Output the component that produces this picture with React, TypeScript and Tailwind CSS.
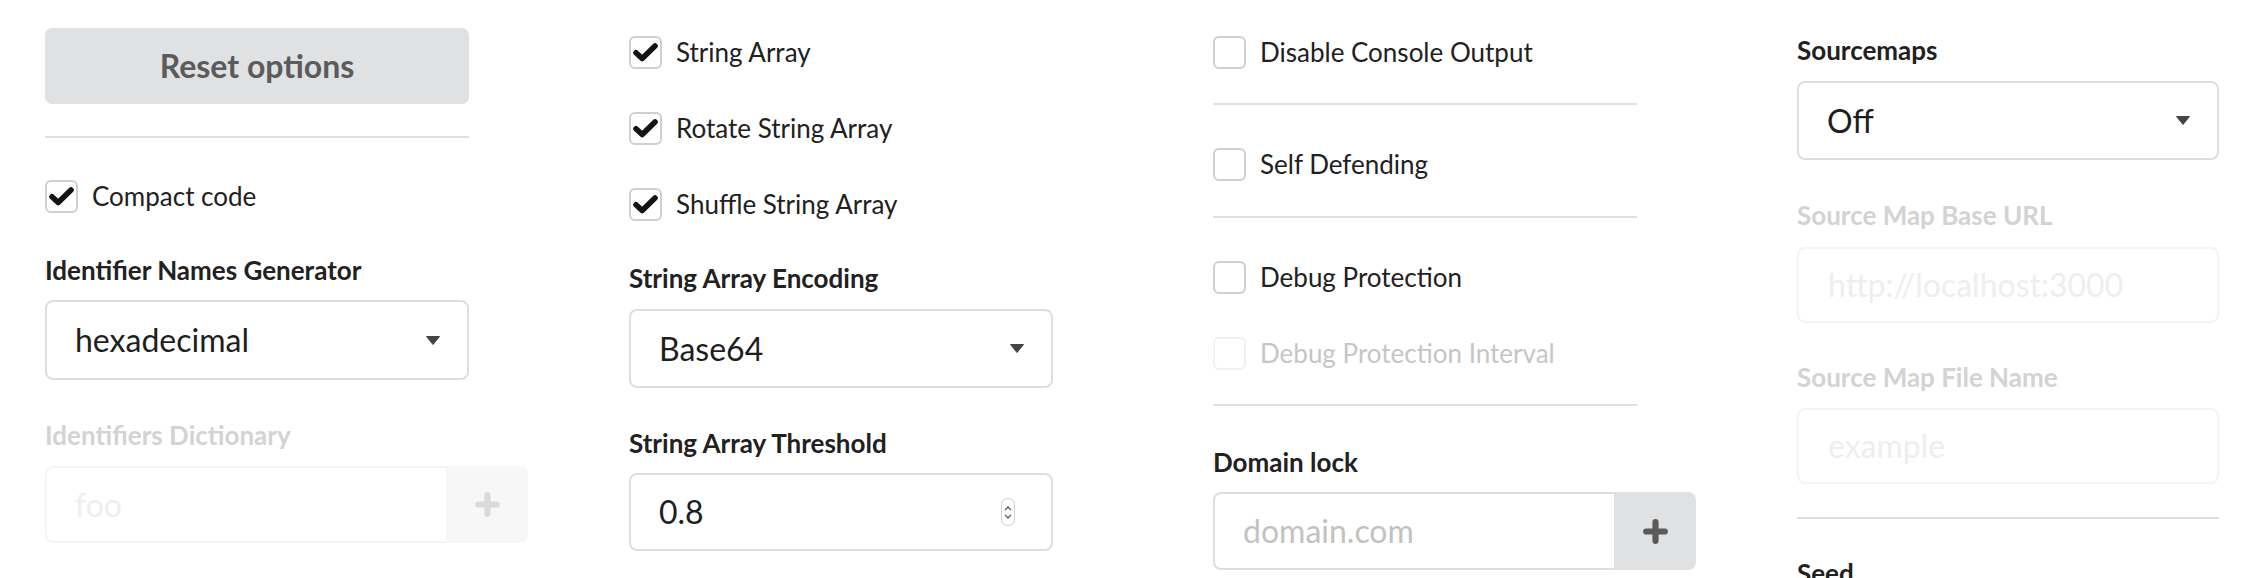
import React from "react";

const FONT = "font-['Lato',sans-serif]";

function CheckIcon() {
  return (
    <svg width="25" height="19" viewBox="0 0 25 19">
      <path d="M3 9.8 L9.2 15.5 L22 3" fill="none" stroke="#141414" strokeWidth="5.6" strokeLinecap="round" strokeLinejoin="round" />
    </svg>
  );
}

function Checkbox({ label, checked = false, disabled = false, className = "" }: { label: string; checked?: boolean; disabled?: boolean; className?: string }) {
  return (
    <div className={`flex items-center h-[33px] ${className}`}>
      <div
        className={
          disabled
            ? "w-[33px] h-[33px] rounded-[6px] border-2 border-[#f1f1f1] bg-white flex items-center justify-center"
            : "w-[33px] h-[33px] rounded-[6px] border-2 border-[#cfcfd0] bg-white flex items-center justify-center"
        }
      >
        {checked && <CheckIcon />}
      </div>
      <span className={disabled ? "ml-[14px] text-[26px] leading-[33px] text-[#c6c6c6]" : "ml-[14px] text-[26px] leading-[33px] text-[#212121]"}>
        {label}
      </span>
    </div>
  );
}

function Label({ children, disabled = false, className = "" }: { children: React.ReactNode; disabled?: boolean; className?: string }) {
  return (
    <div className={`text-[26px] leading-[25px] font-bold whitespace-nowrap ${disabled ? "text-[#d3d3d3]" : "text-[#212121]"} ${className}`}>
      {children}
    </div>
  );
}

function Divider({ className = "" }: { className?: string }) {
  return <div className={`w-full h-[2px] bg-[#dfdfe0] ${className}`} />;
}

function Caret() {
  return (
    <svg width="14" height="9" viewBox="0 0 14 9">
      <path d="M0.5 0.5 H13.5 L7 8.5 Z" fill="#454545" strokeLinejoin="round" stroke="#454545" strokeWidth="1" />
    </svg>
  );
}

function Select({ value, className = "" }: { value: string; className?: string }) {
  return (
    <div className={`w-full rounded-[8px] border-2 border-[#dedede] bg-white flex items-center pl-[28px] pr-[27px] ${className}`}>
      <span className="flex-1 text-[32px] text-[#1e1e1e]">{value}</span>
      <Caret />
    </div>
  );
}

function Plus({ color }: { color: string }) {
  return (
    <svg width="25" height="25" viewBox="0 0 25 25">
      <path d="M12.5 3.2 V21.8 M3.2 12.5 H21.8" stroke={color} strokeWidth="6.2" strokeLinecap="round" />
    </svg>
  );
}

function ActionInput({ placeholder, disabled = false, className = "" }: { placeholder: string; disabled?: boolean; className?: string }) {
  return (
    <div className={`flex w-[483px] ${className}`}>
      <div
        className={
          disabled
            ? "flex-1 rounded-l-[8px] border-2 border-r-0 border-[#f4f4f4] bg-white flex items-center pl-[28px]"
            : "flex-1 rounded-l-[8px] border-2 border-r-0 border-[#dedede] bg-white flex items-center pl-[28px]"
        }
      >
        <span className={disabled ? "text-[32px] text-[#eeeeee]" : "text-[32px] text-[#c2c2c2]"}>{placeholder}</span>
      </div>
      <div
        className={
          disabled
            ? "w-[82px] rounded-r-[8px] bg-[#f7f7f7] flex items-center justify-center"
            : "w-[82px] rounded-r-[8px] bg-[#e0e1e2] flex items-center justify-center"
        }
      >
        <Plus color={disabled ? "#dadada" : "#5a5a5a"} />
      </div>
    </div>
  );
}

function TextInput({ placeholder, className = "" }: { placeholder: string; className?: string }) {
  return (
    <div className={`w-full rounded-[8px] border-2 border-[#f4f4f4] bg-white flex items-center pl-[29px] ${className}`}>
      <span className="text-[32px] text-[#eeeeee]">{placeholder}</span>
    </div>
  );
}

function Spinner() {
  return (
    <div className="w-[14px] h-[28px] rounded-[7px] border border-[#cfcfcf] flex flex-col items-center justify-center gap-[3px]">
      <svg width="8" height="5" viewBox="0 0 8 5">
        <path d="M1 4.2 L4 1 L7 4.2" fill="none" stroke="#555" strokeWidth="1.2" />
      </svg>
      <svg width="8" height="5" viewBox="0 0 8 5">
        <path d="M1 0.8 L4 4 L7 0.8" fill="none" stroke="#555" strokeWidth="1.2" />
      </svg>
    </div>
  );
}

function NumberInput({ value, className = "" }: { value: string; className?: string }) {
  return (
    <div className={`w-full rounded-[8px] border-2 border-[#dedede] bg-white flex items-center pl-[28px] pr-[36px] ${className}`}>
      <span className="flex-1 text-[32px] text-[#1e1e1e]">{value}</span>
      <Spinner />
    </div>
  );
}

export default function App() {
  return (
    <div className={`w-[2242px] h-[578px] overflow-hidden bg-white ${FONT} text-[#212121]`}>
      <div className="grid grid-cols-[repeat(4,424px)] gap-x-[160px] pl-[45px]">
        {/* Column 1 */}
        <div className="flex flex-col items-start">
          <button className="mt-[28px] h-[76px] w-full rounded-[7px] bg-[#e0e1e2] text-[#5b5b5b] font-bold text-[32px] flex items-center justify-center">
            Reset options
          </button>
          <Divider className="mt-[32px]" />
          <Checkbox className="mt-[42px]" label="Compact code" checked />
          <Label className="mt-[45px]">Identifier Names Generator</Label>
          <Select className="mt-[17px] h-[80px]" value="hexadecimal" />
          <Label className="mt-[43px]" disabled>
            Identifiers Dictionary
          </Label>
          <ActionInput className="mt-[18px] h-[77px]" placeholder="foo" disabled />
        </div>

        {/* Column 2 */}
        <div className="flex flex-col items-start">
          <Checkbox className="mt-[36px]" label="String Array" checked />
          <Checkbox className="mt-[43px]" label="Rotate String Array" checked />
          <Checkbox className="mt-[43px]" label="Shuffle String Array" checked />
          <Label className="mt-[45px]">String Array Encoding</Label>
          <Select className="mt-[18px] h-[79px]" value="Base64" />
          <Label className="mt-[43px]">String Array Threshold</Label>
          <NumberInput className="mt-[17px] h-[78px]" value="0.8" />
        </div>

        {/* Column 3 */}
        <div className="flex flex-col items-start">
          <Checkbox className="mt-[36px]" label="Disable Console Output" />
          <Divider className="mt-[34px]" />
          <Checkbox className="mt-[43px]" label="Self Defending" />
          <Divider className="mt-[35px]" />
          <Checkbox className="mt-[43px]" label="Debug Protection" />
          <Checkbox className="mt-[43px]" label="Debug Protection Interval" disabled />
          <Divider className="mt-[34px]" />
          <Label className="mt-[44px]">Domain lock</Label>
          <ActionInput className="mt-[17px] h-[78px]" placeholder="domain.com" />
        </div>

        {/* Column 4 */}
        <div className="flex flex-col items-start w-[422px]">
          <Label className="mt-[38px]">Sourcemaps</Label>
          <Select className="mt-[18px] h-[79px]" value="Off" />
          <Label className="mt-[43px]" disabled>
            Source Map Base URL
          </Label>
          <TextInput className="mt-[19px] h-[76px]" placeholder="http://localhost:3000" />
          <Label className="mt-[42px]" disabled>
            Source Map File Name
          </Label>
          <TextInput className="mt-[18px] h-[76px]" placeholder="example" />
          <Divider className="mt-[33px]" />
          <Label className="mt-[42px]">Seed</Label>
        </div>
      </div>
    </div>
  );
}
